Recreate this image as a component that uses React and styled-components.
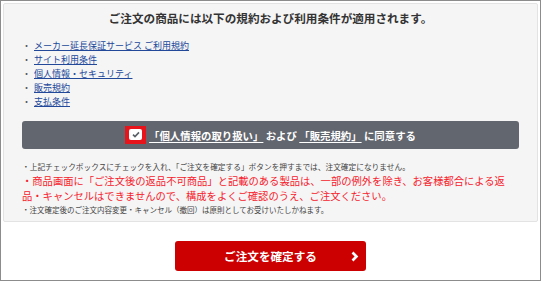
import styled, { createGlobalStyle } from 'styled-components';

const GlobalStyle = createGlobalStyle`
    html, body {
        margin: 0;
        padding: 0;
        background: #ffffff;
    }
    body {
        font-family: "Noto Sans CJK JP", "Noto Sans", sans-serif;
    }
`
const Frame = styled.div `
    width: 541px;
    height: 281px;
    box-sizing: border-box;
    border: 1px solid #8c8c8c;
    padding: 2px 2px 0 2px;
    background: #ffffff;
`
const Panel = styled.section `
    background: #f5f5f5;
    border: 1px solid #e3e3e3;
    border-radius: 2px;
    padding: 5px 18px 5px 18px;
`
const Title = styled.h2 `
    margin: 0;
    font-size: 11.6px;
    line-height: 18px;
    font-weight: 700;
    color: #333333;
    text-align: center;
`
const TermList = styled.ul `
    list-style: none;
    margin: 12px 0 0 0;
    padding: 0;
`
const TermItem = styled.li `
    display: flex;
    font-size: 9px;
    line-height: 14px;
    color: #555555;
    &::before {
        content: "・";
        width: 12px;
    }
`
const TermLink = styled.a `
    color: #22489a;
    text-decoration: underline;
    text-underline-offset: 1px;
`
const AgreeBar = styled.div `
    margin-top: 12px;
    height: 28px;
    background: #62666e;
    border-radius: 3px;
    display: flex;
    align-items: center;
    justify-content: center;
    gap: 3px;
`
const CheckFrame = styled.span `
    display: flex;
    align-items: center;
    justify-content: center;
    width: 21px;
    height: 18px;
    box-sizing: border-box;
    background: #e8141c;
    margin-top: -1px;
`
const CheckBox = styled.span `
    display: flex;
    align-items: center;
    justify-content: center;
    width: 13px;
    height: 11px;
    background: #ffffff;
    border-radius: 2px;
`
const AgreeText = styled.span `
    font-size: 10.4px;
    font-weight: 700;
    color: #ffffff;
    white-space: nowrap;
`
const AgreeLink = styled.a `
    color: #ffffff;
    text-decoration: underline;
    text-underline-offset: 2px;
`
const Notes = styled.div `
    margin-top: 11px;
`
const SmallNote = styled.p `
    margin: 0;
    font-size: ${p => p.$size || 7.5}px;
    line-height: 13px;
    color: #444444;
    white-space: nowrap;
`
const Warning = styled.p `
    margin: 0;
    font-size: 10.3px;
    line-height: 15px;
    color: #f5222d;
    white-space: nowrap;
`
const Footer = styled.div `
    display: flex;
    justify-content: center;
    padding-top: 19px;
`
const ConfirmBtn = styled.button `
    position: relative;
    width: 191px;
    height: 30px;
    border: none;
    border-radius: 3px;
    background: #cc0000;
    color: #ffffff;
    font-family: "Noto Sans CJK JP", "Noto Sans", sans-serif;
    font-size: 11.6px;
    font-weight: 700;
    cursor: pointer;
`
const Chevron = styled.svg `
    position: absolute;
    right: 7px;
    top: 10px;
`

const terms = [
    'メーカー延長保証サービス ご利用規約',
    'サイト利用条件',
    '個人情報・セキュリティ',
    '販売規約',
    '支払条件',
]

const App = () => {
    return(
        <Frame>
            <GlobalStyle/>
            <Panel>
                <Title>ご注文の商品には以下の規約および利用条件が適用されます。</Title>
                <TermList>
                    {terms.map(t => (
                        <TermItem key={t}><TermLink href="#">{t}</TermLink></TermItem>
                    ))}
                </TermList>
                <AgreeBar>
                    <CheckFrame>
                        <CheckBox>
                            <svg width="8" height="7" viewBox="0 0 8 7">
                                <polyline points="1,3.6 3,5.6 7,1.4" fill="none" stroke="#5a5e66" strokeWidth="1.6"/>
                            </svg>
                        </CheckBox>
                    </CheckFrame>
                    <AgreeText>
                        <AgreeLink href="#">「個人情報の取り扱い」</AgreeLink> および <AgreeLink href="#">「販売規約」</AgreeLink> に同意する
                    </AgreeText>
                </AgreeBar>
                <Notes>
                    <SmallNote $size={7.7}>・上記チェックボックスにチェックを入れ、「ご注文を確定する」ボタンを押すまでは、注文確定になりません。</SmallNote>
                    <Warning>
                        ・商品画面に「ご注文後の返品不可商品」と記載のある製品は、一部の例外を除き、お客様都合による返<br/>
                        品・キャンセルはできませんので、構成をよくご確認のうえ、ご注文ください。
                    </Warning>
                    <SmallNote>・注文確定後のご注文内容変更・キャンセル（撤回）は原則としてお受けいたしかねます。</SmallNote>
                </Notes>
            </Panel>
            <Footer>
                <ConfirmBtn>
                    ご注文を確定する
                    <Chevron width="8" height="11" viewBox="0 0 8 11">
                        <polyline points="1.5,1.5 5.5,5.5 1.5,9.5" fill="none" stroke="#ffffff" strokeWidth="2.6"/>
                    </Chevron>
                </ConfirmBtn>
            </Footer>
        </Frame>
    )
}

export default App;
